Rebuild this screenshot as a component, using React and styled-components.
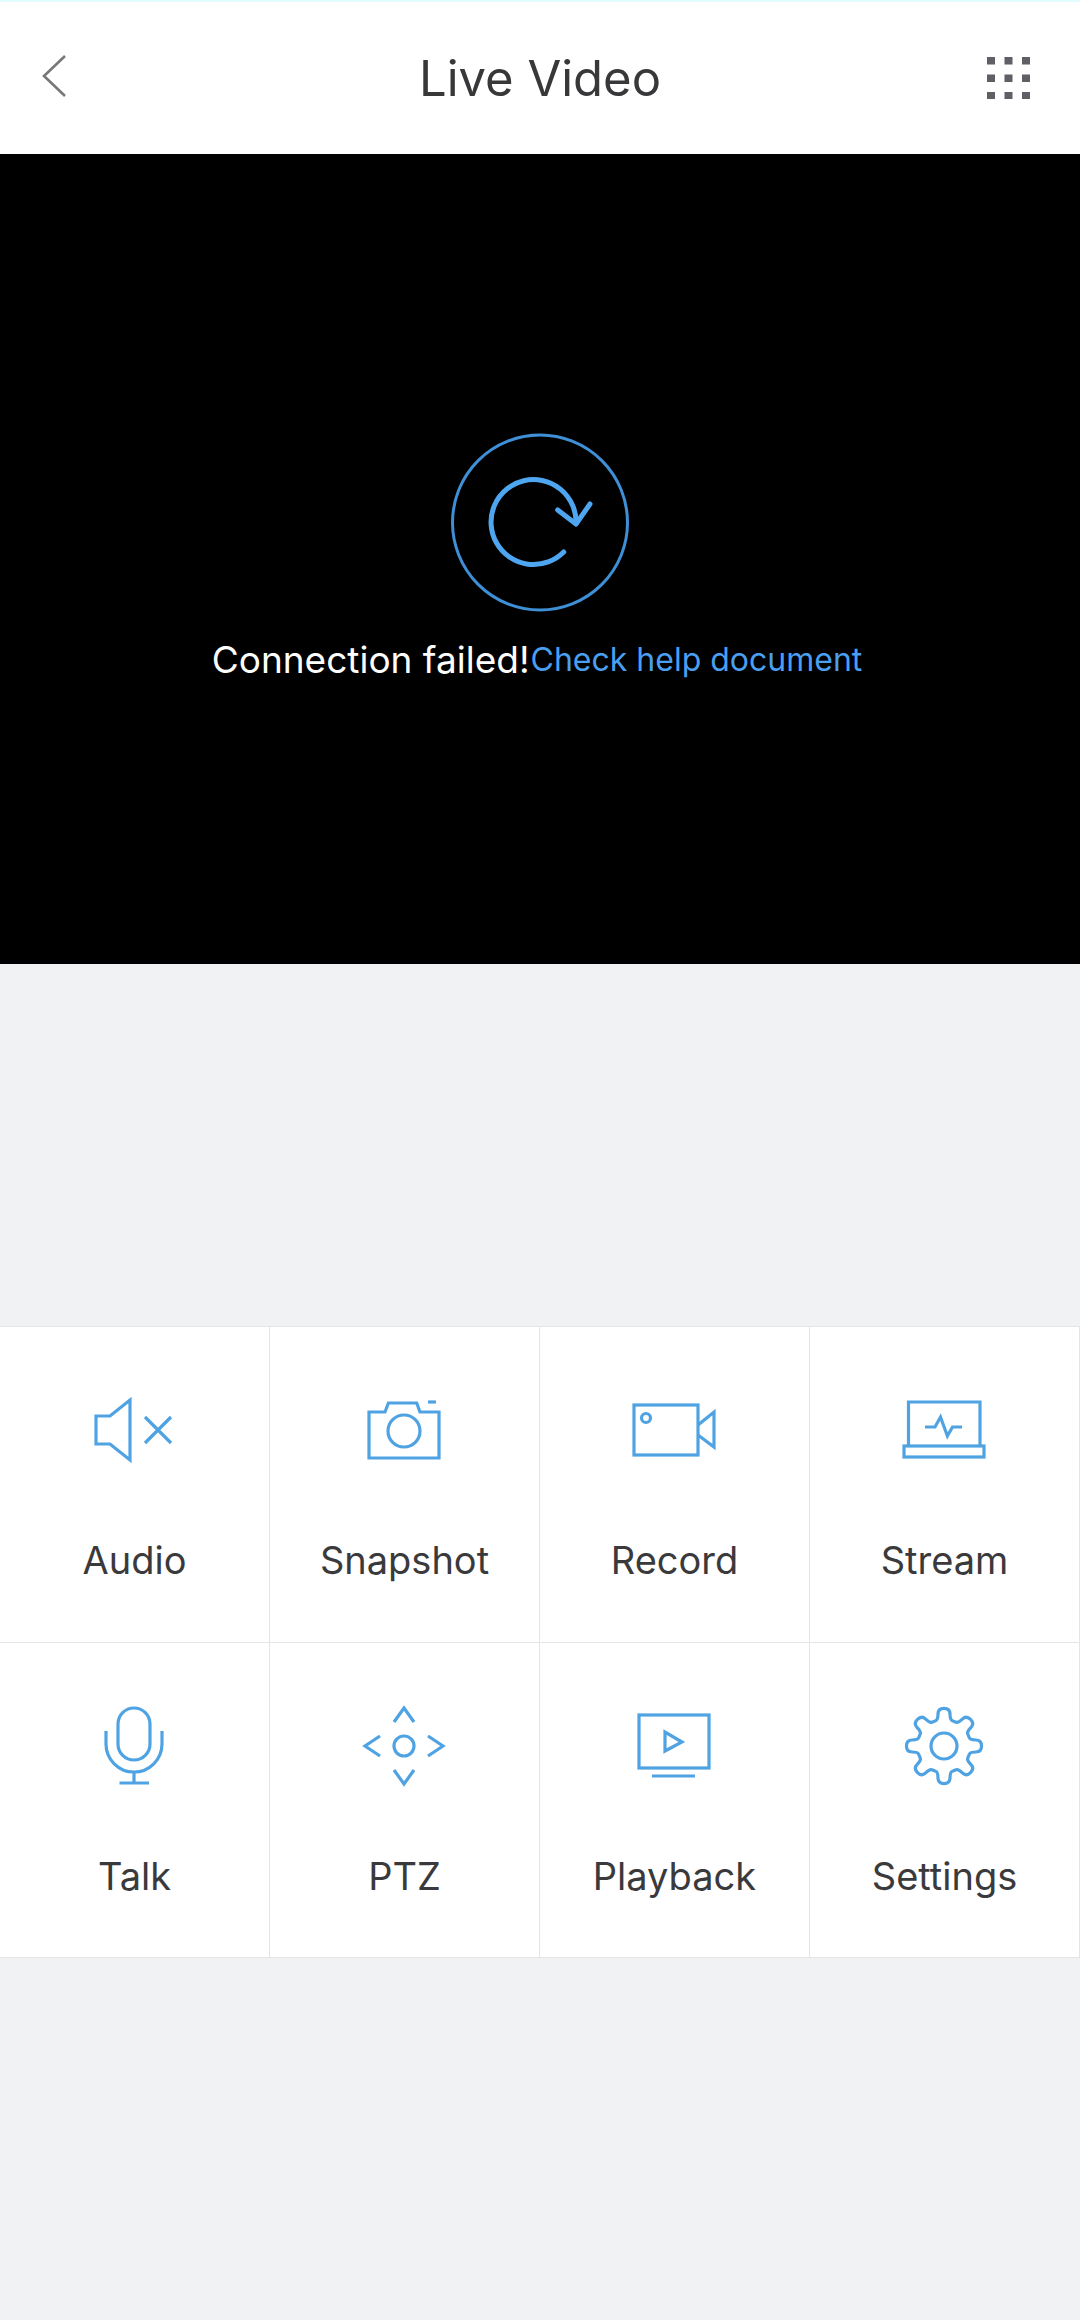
import React from 'react';
import styled, { createGlobalStyle } from 'styled-components';

const GlobalStyle = createGlobalStyle`
  html, body {
    margin: 0;
    padding: 0;
    background: #f1f2f4;
    font-family: Inter, "Noto Sans", sans-serif;
  }
`;

const BLUE = '#4fa3e2';

const gearPath = () => {
  const cx = 44;
  const cy = 45;
  const pts = [];
  for (let i = 0; i < 8; i++) {
    const a = (i * 45 - 90) * (Math.PI / 180);
    const deg = Math.PI / 180;
    [[26.5, -22.5], [27, -13], [38, -9], [38, 9], [27, 13]].forEach(([r, d]) => {
      pts.push([cx + r * Math.cos(a + d * deg), cy + r * Math.sin(a + d * deg)]);
    });
  }
  const mid = (p, q) => [(p[0] + q[0]) / 2, (p[1] + q[1]) / 2];
  const f = n => n.toFixed(2);
  const start = mid(pts[pts.length - 1], pts[0]);
  let d = `M${f(start[0])} ${f(start[1])}`;
  pts.forEach((p, i) => {
    const m = mid(p, pts[(i + 1) % pts.length]);
    d += `Q${f(p[0])} ${f(p[1])} ${f(m[0])} ${f(m[1])}`;
  });
  return d + 'Z';
};

const icons = {
  audio: (
    <>
      <path d="M6 31H20L40 15V75L20 59H6Z" />
      <path d="M55 32L81 58M81 32L55 58" />
    </>
  ),
  snapshot: (
    <>
      <path d="M9 27H25L28.4 18H56.7L60 27H79V73H9Z" />
      <circle cx="44" cy="46" r="16" />
      <path d="M68 17H76" />
    </>
  ),
  record: (
    <>
      <rect x="4" y="20" width="64" height="50" />
      <path d="M68 40L84 27V62L68 50" />
      <circle cx="16" cy="33" r="4.5" />
    </>
  ),
  stream: (
    <>
      <path d="M8.5 61V17H80V61" />
      <rect x="4" y="61" width="80" height="11" />
      <path d="M25 42H35L40.5 32L47.4 51L52.5 42H62" />
    </>
  ),
  talk: (
    <>
      <rect x="28" y="7" width="32" height="52" rx="16" />
      <path d="M16 30V43A28 28 0 0 0 72 43V30" />
      <path d="M44 71V82M29.5 82H59" />
    </>
  ),
  ptz: (
    <>
      <circle cx="44" cy="45" r="10" />
      <path d="M34 21L44 7L54 21" />
      <path d="M34 69L44 83L54 69" />
      <path d="M20 35L5 45L20 55" />
      <path d="M68 35L83 45L68 55" />
    </>
  ),
  playback: (
    <>
      <rect x="9" y="14" width="70" height="53" />
      <path d="M22 75H65" />
      <path d="M35 31V50L52 41Z" />
    </>
  ),
  settings: (
    <>
      <path d={gearPath()} />
      <circle cx="44" cy="45" r="13" />
    </>
  ),
};

const actions = [
  { key: 'audio', label: 'Audio' },
  { key: 'snapshot', label: 'Snapshot' },
  { key: 'record', label: 'Record' },
  { key: 'stream', label: 'Stream' },
  { key: 'talk', label: 'Talk' },
  { key: 'ptz', label: 'PTZ' },
  { key: 'playback', label: 'Playback' },
  { key: 'settings', label: 'Settings' },
];

const App = () => (
  <Page>
    <GlobalStyle />
    <Header>
      <BackIcon viewBox="0 0 30 50" width="30" height="50">
        <path d="M26 3L5 23L26 43" fill="none" stroke="#77777a" strokeWidth="2.6" />
      </BackIcon>
      <Title>Live Video</Title>
      <MenuIcon viewBox="0 0 43 42" width="43" height="42">
        {[0, 17.5, 35].map(y =>
          [0, 17.5, 35].map(x => <rect key={`${x}-${y}`} x={x} y={y} width="8" height="7.5" fill="#5f5f66" />)
        )}
      </MenuIcon>
    </Header>
    <Video>
      <svg viewBox="0 0 180 180" width="180" height="180" fill="none">
        <circle cx="90" cy="89.5" r="87.5" stroke="#3f8fd6" strokeWidth="3" />
        <path d="M113.7 119A42.5 42.5 0 1 1 126 91" stroke="#4ea6f0" strokeWidth="5" strokeLinecap="round" />
        <path d="M107.7 77L126 91L140 71" stroke="#4ea6f0" strokeWidth="5" strokeLinecap="round" strokeLinejoin="round" />
      </svg>
      <Message>
        <Failed>Connection failed!</Failed>
        <HelpLink>Check help document</HelpLink>
      </Message>
    </Video>
    <ActionGrid>
      {actions.map(action => (
        <Action key={action.key}>
          <ActionIcon viewBox="0 0 90 90">{icons[action.key]}</ActionIcon>
          <ActionLabel>{action.label}</ActionLabel>
        </Action>
      ))}
    </ActionGrid>
  </Page>
);

const Page = styled.div`
  width: 1080px;
  height: 2320px;
  background: #f1f2f4;
  overflow: hidden;
`;

const Header = styled.div`
  height: 154px;
  box-sizing: border-box;
  background: #fff;
  border-top: 2px solid #e2fdfd;
  display: grid;
  grid-template-columns: 1fr auto 1fr;
  align-items: center;
  padding: 0 50px;
`;

const BackIcon = styled.svg`
  display: block;
  margin-left: -11px;
`;

const MenuIcon = styled.svg`
  display: block;
  justify-self: end;
`;

const Title = styled.h1`
  margin: 0;
  font-size: 49px;
  font-weight: 400;
  color: #38383a;
`;

const Video = styled.div`
  height: 810px;
  box-sizing: border-box;
  background: #000;
  padding-top: 279px;
  display: flex;
  flex-direction: column;
  align-items: center;
`;

const Message = styled.div`
  margin: 24px 6px 0 0;
  display: flex;
  align-items: center;
  gap: 1px;
`;

const Failed = styled.span`
  font-size: 37px;
  color: #fff;
`;

const HelpLink = styled.a`
  font-size: 32px;
  color: #4a9ff0;
`;

const ActionGrid = styled.div`
  margin-top: 362px;
  display: grid;
  grid-template-columns: repeat(4, 270px);
  grid-auto-rows: 315.5px;
  background: #fff;
  border-top: 1px solid #e4e5e7;
`;

const Action = styled.div`
  box-sizing: border-box;
  display: flex;
  flex-direction: column;
  align-items: center;
  padding-top: 58px;
  background: #fff;
  border-right: 1px solid #e4e5e7;
  border-bottom: 1px solid #e4e5e7;
`;

const ActionIcon = styled.svg`
  display: block;
  width: 90px;
  height: 90px;
  fill: none;
  stroke: ${BLUE};
  stroke-width: 3.2;
`;

const ActionLabel = styled.span`
  margin-top: 62px;
  font-size: 38px;
  line-height: 46px;
  color: #3a3a3c;
`;

export default App;
